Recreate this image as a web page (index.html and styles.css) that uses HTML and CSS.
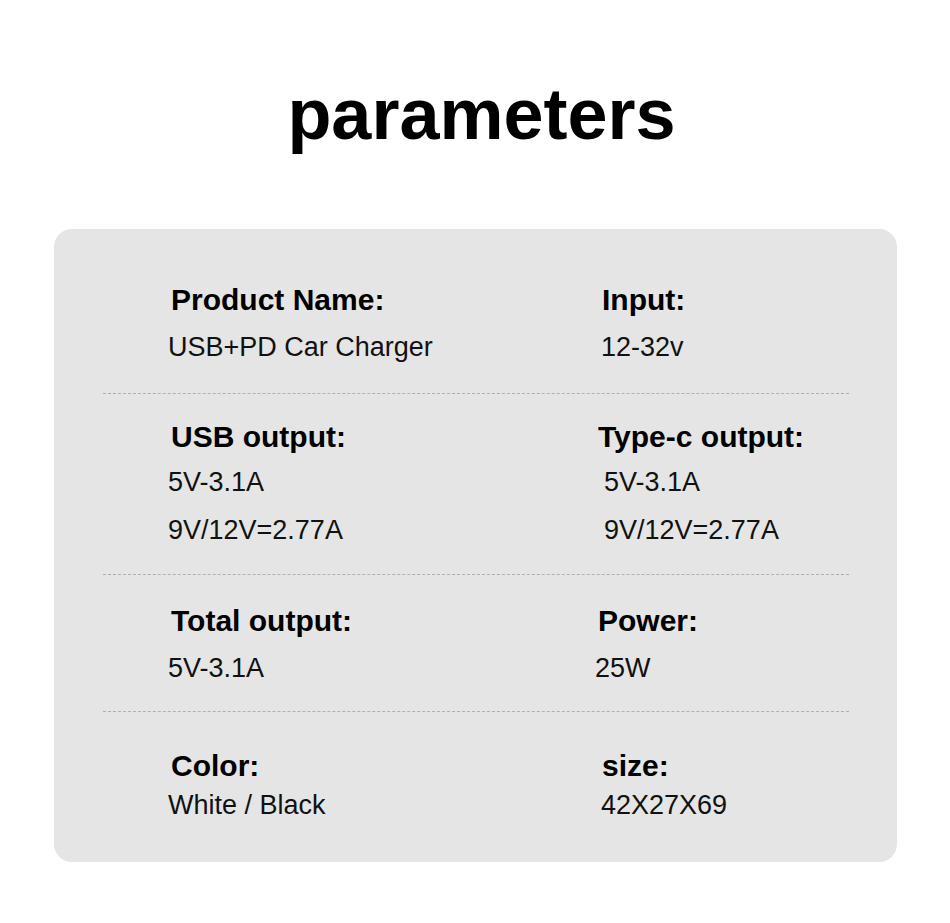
FILE: index.html
```html
<!DOCTYPE html>
<html lang="en">
<head>
<meta charset="utf-8">
<title>parameters</title>
<link rel="stylesheet" href="styles.css">
</head>
<body>
<h1 class="title">parameters</h1>
<div class="card">
  <div class="row row-1">
    <div class="cell">
      <div class="label">Product Name:</div>
      <div class="value">USB+PD Car Charger</div>
    </div>
    <div class="cell right">
      <div class="label">Input:</div>
      <div class="value">12-32v</div>
    </div>
  </div>
  <div class="divider"></div>
  <div class="row row-2">
    <div class="cell">
      <div class="label">USB output:</div>
      <div class="value tight">5V-3.1A</div>
      <div class="value">9V/12V=2.77A</div>
    </div>
    <div class="cell right">
      <div class="label shift-l">Type-c output:</div>
      <div class="value tight shift-r">5V-3.1A</div>
      <div class="value shift-r">9V/12V=2.77A</div>
    </div>
  </div>
  <div class="divider"></div>
  <div class="row row-3">
    <div class="cell">
      <div class="label">Total output:</div>
      <div class="value">5V-3.1A</div>
    </div>
    <div class="cell right">
      <div class="label shift-l">Power:</div>
      <div class="value shift-ll">25W</div>
    </div>
  </div>
  <div class="divider"></div>
  <div class="row row-4">
    <div class="cell">
      <div class="label">Color:</div>
      <div class="value close">White / Black</div>
    </div>
    <div class="cell right">
      <div class="label">size:</div>
      <div class="value close">42X27X69</div>
    </div>
  </div>
</div>
</body>
</html>
```
FILE: styles.css
```css
* { box-sizing: border-box; }
html, body {
  margin: 0;
  padding: 0;
  background: #ffffff;
}
body {
  width: 950px;
  font-family: "Liberation Sans", Arial, sans-serif;
  color: #000;
}
.title {
  margin: 78px 0 0 0;
  padding-left: 13px;
  font-size: 72px;
  line-height: 72px;
  font-weight: 700;
  text-align: center;
  color: #000;
}
.card {
  margin: 79px 53px 0 54px;
  background: #e5e5e5;
  border-radius: 18px;
  padding: 53px 48px 33px 49px;
}
.row {
  display: grid;
  grid-template-columns: 431px 1fr;
  padding-left: 66px;
}
.row-1 { padding-bottom: 22px; }
.row-2 { padding-top: 25px; padding-bottom: 20px; }
.row-3 { padding-top: 28px; padding-bottom: 19px; }
.row-4 { padding-top: 36px; }
.label {
  font-size: 30px;
  line-height: 36px;
  font-weight: 700;
  color: #000;
  margin-left: 2px;
}
.value {
  font-size: 27px;
  line-height: 48px;
  color: #111;
  margin-top: 5px;
  margin-left: -1px;
}
.right .value { margin-left: 1px; }
.value + .value { margin-top: 0; }
.value.tight { margin-top: 3px; }
.value.close { margin-top: -3px; }
.right .shift-l { margin-left: -2px; }
.right .shift-r { margin-left: 4px; }
.right .shift-ll { margin-left: -5px; }
.divider {
  height: 0;
  border-top: 1px dashed #b0b0b0;
}
```
